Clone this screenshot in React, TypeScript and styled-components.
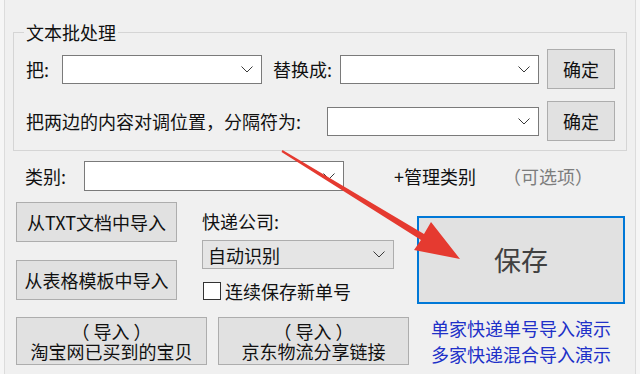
import styled, { createGlobalStyle } from "styled-components";

const GlobalStyle = createGlobalStyle`
  html, body { margin: 0; padding: 0; background: #f6f6f6; }
  body { font-family: "Noto Sans CJK SC", "Noto Sans", sans-serif; color: #111; }
`;

const Page = styled.div`
  position: relative;
  width: 640px;
  height: 374px;
  overflow: hidden;
`;

const Window = styled.div`
  box-sizing: border-box;
  width: 632px;
  height: 374px;
  margin-left: 4px;
  padding-top: 22px;
  background: #f0f0f0;
  border-left: 1px solid #dcdcdc;
  border-right: 1px solid #dcdcdc;
  font-size: 18px;
`;

const GroupBox = styled.fieldset`
  box-sizing: border-box;
  width: 614px;
  min-width: 0;
  margin: 0 0 0 8px;
  padding: 7px 11px 9px 12px;
  border: 1px solid #d5d5d5;
`;

const Legend = styled.legend`
  margin-left: -2px;
  padding: 0 2px;
  font-size: 18px;
  line-height: 20px;
`;

const Row = styled.div`
  display: flex;
  align-items: center;
  height: 40px;
  & + & { margin-top: 12px; }
`;

const Label = styled.span<{ $w: number; $ml?: number }>`
  flex: none;
  width: ${(p) => p.$w}px;
  margin-left: ${(p) => p.$ml ?? 0}px;
  white-space: nowrap;
  line-height: 20px;
`;

const ComboBox = styled.div<{ $w: number; $h?: number; $list?: boolean }>`
  box-sizing: border-box;
  flex: none;
  display: flex;
  align-items: center;
  justify-content: space-between;
  width: ${(p) => p.$w}px;
  height: ${(p) => p.$h ?? 29}px;
  padding: 0 8px 0 5px;
  background: ${(p) => (p.$list ? "#e5e5e5" : "#fff")};
  border: 1px solid ${(p) => (p.$list ? "#adadad" : "#7a7a7a")};
  font-size: 18px;
  line-height: 20px;
`;

const Button = styled.button<{ $w: number; $h: number; $ml?: number }>`
  box-sizing: border-box;
  flex: none;
  width: ${(p) => p.$w}px;
  height: ${(p) => p.$h}px;
  margin-left: ${(p) => p.$ml ?? 0}px;
  padding: 0;
  background: #e1e1e1;
  border: 1px solid #adadad;
  font-family: inherit;
  font-size: 18px;
  line-height: 20px;
  color: #111;
  cursor: pointer;
`;

const SaveButton = styled(Button)`
  border: 2px solid #0078d7;
  font-size: 27px;
  color: #404040;
`;

const CategoryRow = styled.div`
  display: flex;
  align-items: center;
  height: 30px;
  margin-top: 10px;
  padding-left: 20px;
`;

const Manage = styled.span`
  margin-left: 50px;
  line-height: 20px;
`;

const Hint = styled.span`
  margin-left: 27px;
  color: #7d7d7d;
  line-height: 20px;
`;

const Middle = styled.div`
  display: flex;
  align-items: flex-start;
  margin-top: 11px;
`;

const ImportCol = styled.div`
  display: flex;
  flex-direction: column;
  gap: 18px;
  width: 161px;
  margin-left: 11px;
`;

const CourierCol = styled.div`
  display: flex;
  flex-direction: column;
  width: 192px;
  margin-left: 25px;
  padding-top: 9px;
`;

const CourierLabel = styled.div`
  line-height: 20px;
  margin-bottom: 9px;
`;

const CheckRow = styled.label`
  display: flex;
  align-items: center;
  gap: 4px;
  height: 18px;
  margin-top: 13px;
  padding-left: 1px;
  line-height: 20px;
`;

const CheckBox = styled.span`
  box-sizing: border-box;
  width: 18px;
  height: 18px;
  background: #fff;
  border: 1px solid #333;
`;

const SaveCol = styled.div`
  margin-left: 23px;
  padding-top: 14px;
`;

const Bottom = styled.div`
  display: flex;
  align-items: flex-start;
  margin-top: 13px;
  padding-left: 11px;
`;

const Links = styled.div`
  width: 208px;
  margin: -2px 0 0 8px;
  text-align: center;
  line-height: 26px;
  color: #2030c8;
`;

const Link = styled.div`
  cursor: pointer;
`;

const Overlay = styled.svg`
  position: absolute;
  inset: 0;
  pointer-events: none;
`;

function Chevron() {
  return (
    <svg width="12" height="7" viewBox="0 0 12 7">
      <polyline points="0.5,0.5 6,6 11.5,0.5" fill="none" stroke="#3a3a3a" strokeWidth="1" />
    </svg>
  );
}

export default function App() {
  return (
    <Page>
      <GlobalStyle />
      <Window>
        <GroupBox>
          <Legend>文本批处理</Legend>
          <Row>
            <Label $w={36}>把:</Label>
            <ComboBox $w={200}>
              <span />
              <Chevron />
            </ComboBox>
            <Label $w={67} $ml={11}>替换成:</Label>
            <ComboBox $w={199}>
              <span />
              <Chevron />
            </ComboBox>
            <Button $w={68} $h={40} $ml={8}>确定</Button>
          </Row>
          <Row>
            <Label $w={301}>把两边的内容对调位置，分隔符为:</Label>
            <ComboBox $w={212}>
              <span />
              <Chevron />
            </ComboBox>
            <Button $w={68} $h={40} $ml={8}>确定</Button>
          </Row>
        </GroupBox>

        <CategoryRow>
          <Label $w={59}>类别:</Label>
          <ComboBox $w={260} $h={30}>
            <span />
            <Chevron />
          </ComboBox>
          <Manage>+管理类别</Manage>
          <Hint>（可选项）</Hint>
        </CategoryRow>

        <Middle>
          <ImportCol>
            <Button $w={161} $h={40}>从TXT文档中导入</Button>
            <Button $w={161} $h={40}>从表格模板中导入</Button>
          </ImportCol>
          <CourierCol>
            <CourierLabel>快递公司:</CourierLabel>
            <ComboBox $w={192} $list>
              <span>自动识别</span>
              <Chevron />
            </ComboBox>
            <CheckRow>
              <CheckBox />
              连续保存新单号
            </CheckRow>
          </CourierCol>
          <SaveCol>
            <SaveButton $w={208} $h={88}>保存</SaveButton>
          </SaveCol>
        </Middle>

        <Bottom>
          <Button $w={191} $h={48}>
            （ 导入 ）
            <br />
            淘宝网已买到的宝贝
          </Button>
          <Button $w={191} $h={48} $ml={11}>
            （ 导入 ）
            <br />
            京东物流分享链接
          </Button>
          <Links>
            <Link>单家快递单号导入演示</Link>
            <Link>多家快递混合导入演示</Link>
          </Links>
        </Bottom>
      </Window>

      <Overlay width="640" height="374" viewBox="0 0 640 374">
        <polygon
          points="282.5,150.1 424,234 431,222 460,259 414,250 421,240 281.5,151.9"
          fill="#e53a30"
        />
      </Overlay>
    </Page>
  );
}
